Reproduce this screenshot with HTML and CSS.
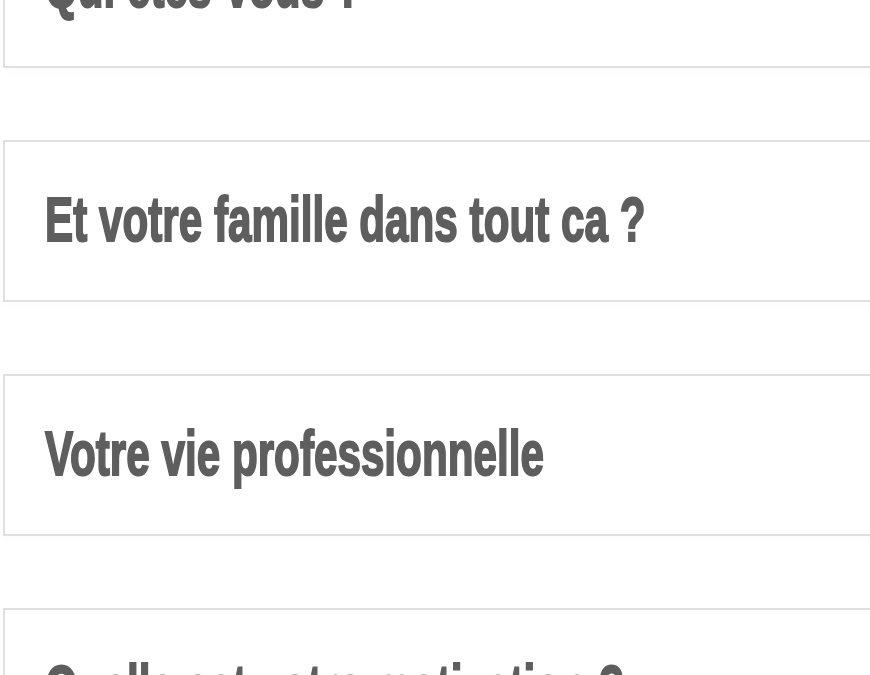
FILE: index.html
```html
<!DOCTYPE html>
<html lang="fr">
<head>
  <meta charset="UTF-8" />
  <meta name="viewport" content="width=device-width, initial-scale=1.0"/>
  <title>Questions</title>
  <link rel="stylesheet" href="styles.css">
</head>
<body>
  <div class="faq">
    <div class="card"><h2>Qui êtes-vous ?</h2></div>
    <div class="card"><h2>Et votre famille dans tout ca ?</h2></div>
    <div class="card"><h2>Votre vie professionnelle</h2></div>
    <div class="card"><h2>Quelle est votre motivation ?</h2></div>
  </div>
</body>
</html>
```

FILE: styles.css
```css
body {
  margin: 0;
  background: #fff;
  overflow: hidden;
  font-family: "Liberation Sans", Arial, sans-serif;
}

.faq {
  margin-top: -94px;
  padding-left: 3px;
  width: 900px;
}

.card {
  height: 154px;
  border: 2px solid #e0e0e0;
  margin-bottom: 72px;
  padding-left: 40px;
  padding-bottom: 4px;
  display: flex;
  align-items: center;
  box-shadow: 0 4px 10px rgba(0,0,0,0.015);
}

.card h2 {
  margin: 0;
  font-size: 63px;
  line-height: 1;
  font-weight: bold;
  color: #5e5e5e;
  white-space: nowrap;
  transform: scaleX(0.67);
  transform-origin: left center;
  -webkit-text-stroke: 2px #5e5e5e;
}
```
